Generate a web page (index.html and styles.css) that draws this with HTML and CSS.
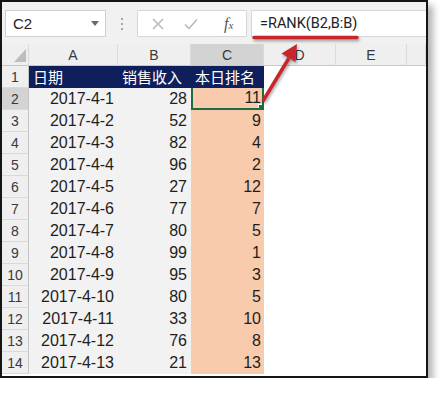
FILE: index.html
```html
<!DOCTYPE html>
<html>
<head lang="zh">
    <meta charset="UTF-8">
    <title>RANK 排名</title>
    <link rel="stylesheet" href="styles.css">
</head>
<body>
    <div id="window">
        <div id="toolbar">
            <div class="namebox">
                <span>C2</span>
                <i class="drop"></i>
            </div>
            <div class="dots"><b></b><b></b><b></b></div>
            <div class="fxbox">
                <svg width="12" height="12" viewBox="0 0 12 12"><path d="M1 1L11 11M11 1L1 11" stroke="#b4b4b4" stroke-width="1.4" fill="none"/></svg>
                <svg width="14" height="12" viewBox="0 0 14 12"><path d="M1 6.5L5 10.5L13 1.5" stroke="#b4b4b4" stroke-width="1.4" fill="none"/></svg>
                <span class="fx">f<small>x</small></span>
            </div>
            <div class="formula">=RANK(B2,B:B)</div>
        </div>

        <div id="sheet">
            <div class="row head">
                <div class="rh corner"><i></i></div>
                <div class="ca">A</div>
                <div class="cb">B</div>
                <div class="cc on">C</div>
                <div class="cd">D</div>
                <div class="ce">E</div>
                <div class="cf"></div>
            </div>
            <div class="row title">
                <div class="rh">1</div>
                <div class="ca">日期</div>
                <div class="cb">销售收入</div>
                <div class="cc">本日排名</div>
                <div class="cd"></div><div class="ce"></div><div class="cf"></div>
            </div>
            <div class="row">
                <div class="rh on">2</div>
                <div class="ca">2017-4-1</div>
                <div class="cb">28</div>
                <div class="cc sel">11</div>
                <div class="cd"></div><div class="ce"></div><div class="cf"></div>
            </div>
            <div class="row">
                <div class="rh">3</div>
                <div class="ca">2017-4-2</div>
                <div class="cb">52</div>
                <div class="cc">9</div>
                <div class="cd"></div><div class="ce"></div><div class="cf"></div>
            </div>
            <div class="row">
                <div class="rh">4</div>
                <div class="ca">2017-4-3</div>
                <div class="cb">82</div>
                <div class="cc">4</div>
                <div class="cd"></div><div class="ce"></div><div class="cf"></div>
            </div>
            <div class="row">
                <div class="rh">5</div>
                <div class="ca">2017-4-4</div>
                <div class="cb">96</div>
                <div class="cc">2</div>
                <div class="cd"></div><div class="ce"></div><div class="cf"></div>
            </div>
            <div class="row">
                <div class="rh">6</div>
                <div class="ca">2017-4-5</div>
                <div class="cb">27</div>
                <div class="cc">12</div>
                <div class="cd"></div><div class="ce"></div><div class="cf"></div>
            </div>
            <div class="row">
                <div class="rh">7</div>
                <div class="ca">2017-4-6</div>
                <div class="cb">77</div>
                <div class="cc">7</div>
                <div class="cd"></div><div class="ce"></div><div class="cf"></div>
            </div>
            <div class="row">
                <div class="rh">8</div>
                <div class="ca">2017-4-7</div>
                <div class="cb">80</div>
                <div class="cc">5</div>
                <div class="cd"></div><div class="ce"></div><div class="cf"></div>
            </div>
            <div class="row">
                <div class="rh">9</div>
                <div class="ca">2017-4-8</div>
                <div class="cb">99</div>
                <div class="cc">1</div>
                <div class="cd"></div><div class="ce"></div><div class="cf"></div>
            </div>
            <div class="row">
                <div class="rh">10</div>
                <div class="ca">2017-4-9</div>
                <div class="cb">95</div>
                <div class="cc">3</div>
                <div class="cd"></div><div class="ce"></div><div class="cf"></div>
            </div>
            <div class="row">
                <div class="rh">11</div>
                <div class="ca">2017-4-10</div>
                <div class="cb">80</div>
                <div class="cc">5</div>
                <div class="cd"></div><div class="ce"></div><div class="cf"></div>
            </div>
            <div class="row">
                <div class="rh">12</div>
                <div class="ca">2017-4-11</div>
                <div class="cb">33</div>
                <div class="cc">10</div>
                <div class="cd"></div><div class="ce"></div><div class="cf"></div>
            </div>
            <div class="row">
                <div class="rh">13</div>
                <div class="ca">2017-4-12</div>
                <div class="cb">76</div>
                <div class="cc">8</div>
                <div class="cd"></div><div class="ce"></div><div class="cf"></div>
            </div>
            <div class="row">
                <div class="rh">14</div>
                <div class="ca">2017-4-13</div>
                <div class="cb">21</div>
                <div class="cc">13</div>
                <div class="cd"></div><div class="ce"></div><div class="cf"></div>
            </div>
        </div>
    </div>

    <!-- 红色标注:公式下划线 + 指向C2的箭头 -->
    <svg id="mark" width="448" height="399" viewBox="0 0 448 399">
        <line x1="254" y1="37.5" x2="357" y2="37.5" stroke="#c9262c" stroke-width="3.5" stroke-linecap="round"/>
        <line x1="263" y1="101" x2="289" y2="58" stroke="#c9262c" stroke-width="3.5"/>
        <polygon points="297,44 281.5,53.5 295.5,62" fill="#c9262c"/>
    </svg>
</body>
</html>
```

FILE: styles.css
```css
*{
    margin: 0;
    padding: 0;
    box-sizing: border-box;
}
body{
    background: #fff;
    font-family: "Liberation Sans", "Noto Sans CJK SC", sans-serif;
    color: #1e1e1e;
}
#window{
    width: 428px;
    height: 378px;
    border: 2px solid #151515;
    background: #fff;
    overflow: hidden;
    box-shadow: 5px 5px 7px rgba(0,0,0,0.3);
}

/* 编辑栏 */
#toolbar{
    height: 42px;
    background: #f1f1f1;
    display: flex;
    align-items: flex-start;
    padding-top: 8px;
    padding-left: 3px;
}
.namebox{
    width: 101px;
    height: 27px;
    background: #fff;
    border: 1px solid #cfcfcf;
    display: flex;
    align-items: center;
    justify-content: space-between;
    padding: 0 6px 0 7px;
    font-size: 15px;
    color: #222;
}
.drop{
    width: 0;
    height: 0;
    border-left: 4px solid transparent;
    border-right: 4px solid transparent;
    border-top: 5px solid #6a6a6a;
}
.dots{
    width: 31px;
    height: 27px;
    display: flex;
    flex-direction: column;
    align-items: center;
    justify-content: center;
    gap: 3px;
}
.dots b{
    width: 2px;
    height: 2px;
    background: #a8a8a8;
}
.fxbox{
    width: 110px;
    height: 27px;
    background: #fff;
    border: 1px solid #d6d6d6;
    display: flex;
    align-items: center;
    padding-left: 14px;
    gap: 20px;
}
.fx{
    font-family: "Liberation Serif", serif;
    font-style: italic;
    font-size: 16px;
    color: #555;
    margin-left: 6px;
}
.fx small{
    font-size: 11px;
}
.formula{
    flex: 1;
    height: 27px;
    margin-left: 4px;
    background: #fff;
    border: 1px solid #d6d6d6;
    border-right: none;
    padding-left: 8px;
    line-height: 25px;
    font-family: Roboto, "Liberation Sans", sans-serif;
    font-size: 14.5px;
    color: #222;
}

/* 工作表 */
#sheet{
    background: #fff;
}
.row{
    display: flex;
    height: 22px;
    line-height: 22px;
    font-size: 16px;
}
.rh{ width: 27px; flex: none; }
.ca{ width: 89px; flex: none; }
.cb{ width: 73px; flex: none; }
.cc{ width: 73px; flex: none; }
.cd{ width: 72px; flex: none; }
.ce{ width: 71px; flex: none; }
.cf{ flex: 1; }

.row > div{
    white-space: nowrap;
    overflow: hidden;
}
.rh{
    background: #efefef;
    border-right: 1px solid #c4c4c4;
    border-bottom: 1px solid #d9d9d9;
    text-align: center;
    font-size: 14px;
    color: #3a3a3a;
}
.rh.on{
    background: #d3d3d3;
}

.row .ca, .row .cb{
    background: #f2f2f2;
    text-align: right;
    padding-right: 4px;
}
.row .cc{
    background: #f8cbad;
    text-align: right;
    padding-right: 3px;
}

/* 列标题 */
.row.head > div{
    background: #efefef;
    border-bottom: 1px solid #c8c8c8;
    border-right: 1px solid #dadada;
    text-align: center;
    padding: 0;
    font-size: 14px;
    color: #3a3a3a;
}
.row.head > .on{
    background: #d3d3d3;
}
.corner{
    position: relative;
}
.corner i{
    position: absolute;
    right: 2px;
    bottom: 3px;
    width: 0;
    height: 0;
    border-left: 12px solid transparent;
    border-bottom: 13px solid #bdbdbd;
}

.title .ca, .title .cb, .title .cc{
    background: #0f1f5c;
    color: #fff;
    text-align: left;
    padding-left: 4px;
    font-size: 15px;
    font-family: "Noto Sans CJK SC", sans-serif;
}
.row .sel{
    position: relative;
    border: 2px solid #1f6b42;
    border-top: none;
    line-height: 20px;
    padding-right: 1px;
}
.sel:after{
    content: "";
    position: absolute;
    right: -3px;
    bottom: -3px;
    width: 5px;
    height: 5px;
    background: #1f6b42;
    border: 1px solid #fff;
}

#mark{
    position: absolute;
    left: 0;
    top: 0;
    pointer-events: none;
    filter: drop-shadow(1px 2px 1.5px rgba(0,0,0,0.35));
}
```
